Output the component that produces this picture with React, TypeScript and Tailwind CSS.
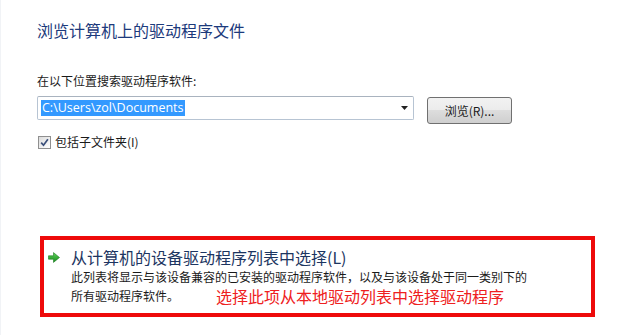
import React from "react";

const FONT = {
  fontFamily: '"Microsoft YaHei", "Noto Sans CJK SC", "Noto Sans", sans-serif',
};

function GreenArrow() {
  return (
    <svg width="12" height="11" viewBox="0 0 12 11" className="shrink-0">
      <defs>
        <linearGradient id="ga" x1="0" y1="0" x2="0" y2="1">
          <stop offset="0" stopColor="#5fd35a" />
          <stop offset="1" stopColor="#168a1c" />
        </linearGradient>
      </defs>
      <path d="M0.5 3.8 H5.5 V0.6 L11.5 5.5 L5.5 10.4 V7.2 H0.5 Z" fill="url(#ga)" stroke="#1c7a22" strokeWidth="0.6" />
    </svg>
  );
}

function Checkbox() {
  return (
    <span className="flex h-[13px] w-[13px] shrink-0 items-center justify-center border border-[#8f8f8f] bg-gradient-to-br from-[#dcdcdc] to-[#ffffff]">
      <svg width="9" height="9" viewBox="0 0 9 9">
        <path d="M1.2 4.6 L3.5 7.2 L7.9 1.2" fill="none" stroke="#3a4f7a" strokeWidth="1.7" />
      </svg>
    </span>
  );
}

export default function App() {
  return (
    <div className="h-[335px] w-[640px] overflow-hidden bg-white" style={FONT}>
      <div className="flex h-full flex-col border-l border-[#f1f3f6] pl-[36px] pt-[19px]">
        <h1 className="text-[16px] leading-[22px] font-normal text-[#1c3a7c]">浏览计算机上的驱动程序文件</h1>

        <p className="mt-[32px] text-[12px] leading-[16px] text-[#1a1a1a]">在以下位置搜索驱动程序软件:</p>

        <div className="mt-[7px] flex items-start gap-[13px]">
          <div className="flex h-[24px] w-[377px] items-center justify-between rounded-[2px] border border-[#b7c4d3] border-t-[#a9b3bf] bg-white pl-[3px] pr-[5px]">
            <span
              className="bg-[#3399ff] px-[1px] text-[12.5px] leading-[16px] text-white"
              style={{ fontFamily: '"Open Sans", "Liberation Sans", sans-serif' }}
            >
              C:\Users\zol\Documents
            </span>
            <svg width="7" height="4" viewBox="0 0 7 4">
              <path d="M0 0 H7 L3.5 4 Z" fill="#222" />
            </svg>
          </div>
          <button className="mt-[1px] flex h-[27px] w-[85px] items-center justify-center rounded-[3px] border border-[#707070] bg-[linear-gradient(#f2f2f2_0%,#ebebeb_50%,#dddddd_50%,#cfcfcf_100%)] text-[12px] leading-[16px] text-[#1a1a1a]">
            浏览(R)...
          </button>
        </div>

        <label className="mt-[11px] flex items-center gap-[4px] text-[12px] leading-[14px] text-[#1a1a1a]">
          <span className="ml-[1px]">
            <Checkbox />
          </span>
          包括子文件夹(I)
        </label>

        <div className="mt-[87px] ml-[3px] h-[81px] w-[555px] border-4 border-[#ee0a0a] pl-[4px] pt-[7px]">
          <div className="flex items-center gap-[11px]">
            <GreenArrow />
            <span className="text-[16px] leading-[20px] text-[#1c3561]">从计算机的设备驱动程序列表中选择(L)</span>
          </div>
          <div className="pl-[23px]">
            <p className="text-[12px] leading-[19px] text-[#1a1a1a]">
              此列表将显示与该设备兼容的已安装的驱动程序软件，以及与该设备处于同一类别下的
            </p>
            <div className="flex items-center">
              <span className="text-[12px] leading-[20px] text-[#1a1a1a]">所有驱动程序软件。</span>
              <span className="ml-[37px] text-[16px] leading-[20px] text-[#ee2020]">选择此项从本地驱动列表中选择驱动程序</span>
            </div>
          </div>
        </div>
      </div>
    </div>
  );
}
